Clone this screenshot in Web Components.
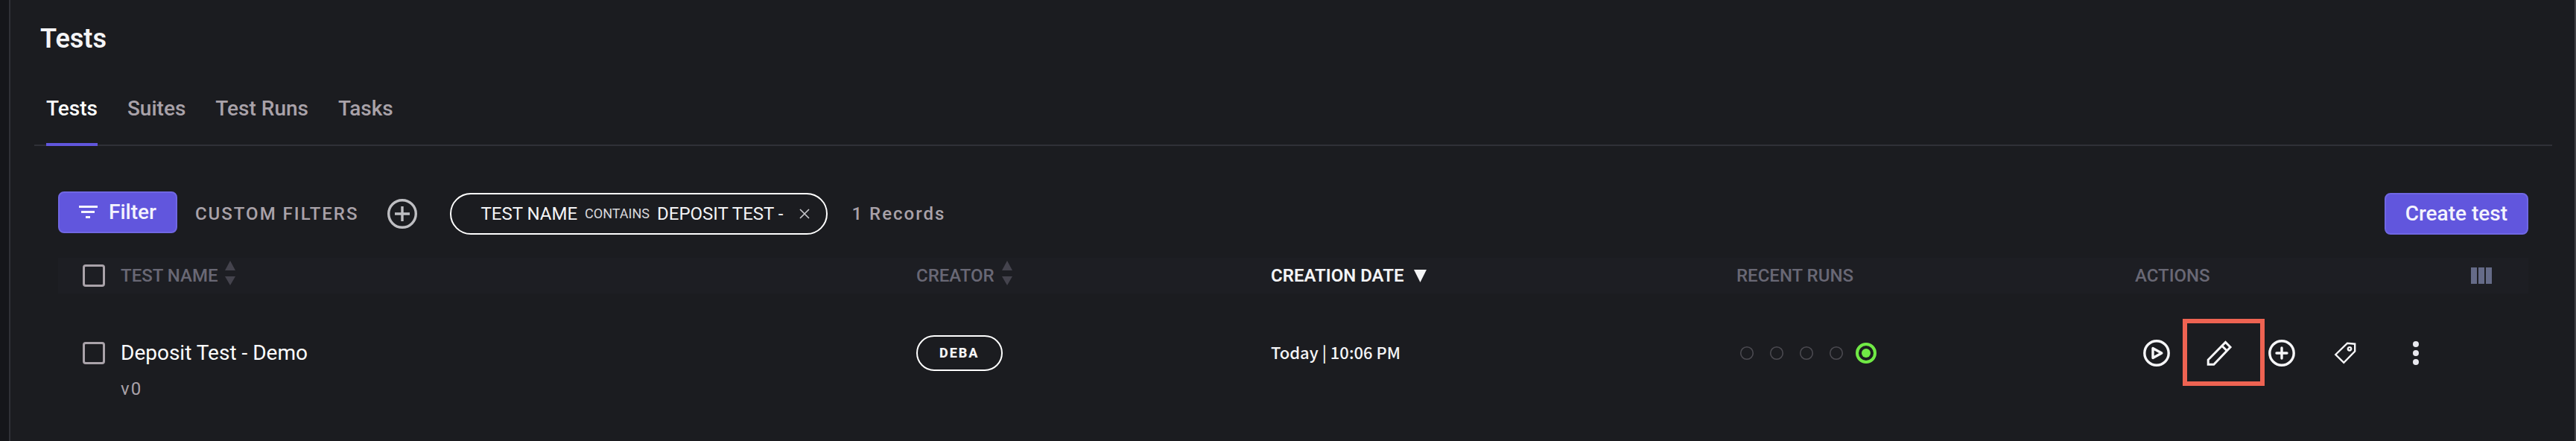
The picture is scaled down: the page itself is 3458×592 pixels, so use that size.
<!DOCTYPE html>
<html lang="en">
<head>
<meta charset="utf-8">
<title>Tests</title>
<style>
  body {
    margin: 0;
    background: #1b1c20;
    color: #f4f4f6;
    font: 400 24px/32px Roboto, "Open Sans", sans-serif;
    --muted: #a9a2a9;
    --dim: #696875;
    --accent: #6156dd;
    --accent-edge: #7067e3;
    --line: #303137;
  }
</style>
</head>
<body>
<app-shell>
  <page-title>Tests</page-title>
  <tab-bar>
    <tab-link active>Tests</tab-link>
    <tab-link>Suites</tab-link>
    <tab-link>Test Runs</tab-link>
    <tab-link>Tasks</tab-link>
  </tab-bar>
  <filter-toolbar>
    <accent-button slot="filter"><ui-icon slot="icon" name="filter"></ui-icon>Filter</accent-button>
    <filter-chip field="TEST NAME" operator="CONTAINS">DEPOSIT TEST -</filter-chip>
    <span slot="count">1 Records</span>
    <accent-button slot="create">Create test</accent-button>
  </filter-toolbar>
  <tests-table></tests-table>
</app-shell>

<script>
const define = (name, html, setup) => {
  const template = document.createElement('template');
  template.innerHTML = html;
  customElements.define(name, class extends HTMLElement {
    connectedCallback() {
      if (this.shadowRoot) return;
      const root = this.attachShadow({ mode: 'open' });
      root.append(template.content.cloneNode(true));
      if (setup) setup(this, root);
    }
  });
};

const ICONS = {
  filter: [26, 18, '<path fill="currentColor" d="M0 0h25v3H0zM3 7h18v3H3zM9 14h6v3H9z"/>'],
  add: [40, 40, '<g fill="none" stroke="currentColor" stroke-width="3.4"><circle cx="20" cy="20" r="18.3"/><path d="M20 10v20M10 20h20"/></g>'],
  close: [14, 14, '<path fill="none" stroke="currentColor" stroke-width="1.6" d="M1 1l12 12M13 1L1 13"/>'],
  sort: [14, 34, '<path fill="#44434d" d="M7 0l7 13H0zM0 21h14L7 33z"/>'],
  down: [22, 34, '<path fill="currentColor" d="M4 12h17L12.500 29z"/>'],
  columns: [30, 22, '<path fill="#656b88" d="M1 0h8v22H1zM11 0h8v22h-8zM21 0h8v22h-8z"/>'],
  play: [36, 36, '<g fill="none" stroke="currentColor" stroke-width="3.4" stroke-linejoin="round"><circle cx="18" cy="18" r="16.2"/><path d="M13 11.600V24.600L24.800 18.100z"/></g>'],
  edit: [36, 36, '<path fill="none" stroke="currentColor" stroke-width="3" d="M3.200 33.200V27L26.500 3.500 33 10 10.800 33.200zM21.700 8.200l6.600 6.600"/>'],
  plus: [36, 36, '<g fill="none" stroke="currentColor" stroke-width="3.400" stroke-linecap="round"><circle cx="18" cy="18" r="16.2"/><path d="M18 11v14M11 18h14"/></g>'],
  tag: [36, 36, '<g fill="none" stroke="currentColor" stroke-width="2.400"><path d="M6.300 20L22 4.700 32.200 5.700V15.500L17.300 30.800z"/><circle cx="25" cy="12.300" r="2.200"/></g>'],
  more: [36, 36, '<g fill="#e9e9ef"><circle cx="18" cy="6" r="4"/><circle cx="18" cy="18" r="4"/><circle cx="18" cy="30" r="4"/></g>'],
  idle: [28, 28, '<circle cx="14" cy="14" r="8.300" fill="none" stroke="#4b4a50" stroke-width="1.600"/>'],
  passed: [28, 28, '<circle cx="14" cy="14" r="12" fill="none" stroke="#70e945" stroke-width="4"/><circle cx="14" cy="14" r="6" fill="#70e945"/>']
};

define('ui-icon', `
  <style>:host { display: inline-flex; flex: none; } svg { display: block; }</style>`,
  (el, root) => {
    const [w, h, body] = ICONS[el.getAttribute('name')];
    root.innerHTML += `<svg width="${w}" height="${h}" viewBox="0 0 ${w} ${h}" aria-hidden="true">${body}</svg>`;
  });

define('app-shell', `
  <style>
    :host {
      display: block;
      box-sizing: border-box;
      min-height: 100vh;
      padding-top: 30px;
      background: #1b1c20;
      border-right: 2px solid #414145;
      box-shadow: inset 12px 0 #15161a, inset 14px 0 var(--line);
    }
  </style>
  <slot></slot>`);

define('page-title', `
  <style>
    :host { display: block; padding: 0 54px; }
    h1 { margin: 0; font-size: 36px; line-height: 44px; font-weight: 600; }
  </style>
  <h1><slot></slot></h1>`);

define('tab-bar', `
  <style>
    :host { display: block; margin: 54px 30px 0 46px; }
    nav { display: flex; gap: 40px; padding: 0 16px; box-shadow: inset 0 -2px var(--line); }
  </style>
  <nav><slot></slot></nav>`);

define('tab-link', `
  <style>
    :host { display: block; }
    a {
      display: block;
      padding-bottom: 28px;
      border-bottom: 4px solid transparent;
      color: var(--muted);
      font-size: 28px;
      line-height: 36px;
      font-weight: 500;
      text-decoration: none;
    }
    :host([active]) a { color: #fff; border-color: var(--accent); }
  </style>
  <a href="#"><slot></slot></a>`);

define('accent-button', `
  <style>
    :host { display: block; }
    button {
      display: flex;
      align-items: center;
      gap: 14px;
      height: 56px;
      padding: 0 26px;
      border: 2px solid var(--accent-edge);
      border-radius: 8px;
      background: var(--accent);
      color: #f4f3fd;
      font: inherit;
      font-size: 28px;
      font-weight: 500;
      white-space: nowrap;
    }
  </style>
  <button type="button"><slot name="icon"></slot><span><slot></slot></span></button>`);

define('filter-chip', `
  <style>
    :host {
      display: flex;
      align-items: center;
      gap: 10px;
      box-sizing: border-box;
      height: 56px;
      padding: 0 22px 0 40px;
      border: 2px solid #fff;
      border-radius: 28px;
      white-space: nowrap;
    }
    small { font-size: 18px; color: #d8d8dc; }
    button { display: flex; margin-left: 12px; padding: 0; border: 0; background: none; color: #c9c9cd; }
  </style>
  <span id="field"></span><small></small><span><slot></slot></span>
  <button type="button" aria-label="Remove filter"><ui-icon name="close"></ui-icon></button>`,
  (el, root) => {
    root.querySelector('#field').textContent = el.getAttribute('field');
    root.querySelector('small').textContent = el.getAttribute('operator');
  });

define('filter-toolbar', `
  <style>
    :host { display: flex; align-items: flex-end; min-height: 58px; margin: 61px 62px 0 78px; }
    .group { display: flex; align-items: center; height: 56px; flex: 1; }
    .label { color: var(--muted); font-weight: 500; letter-spacing: 2px; white-space: nowrap; }
    .add { display: flex; margin: 0 44px 0 38px; padding: 0; border: 0; background: none; color: #bebec2; }
    .first { align-self: flex-start; margin-right: 24px; }
    .count { margin-left: 32px; }
  </style>
  <div class="first"><slot name="filter"></slot></div>
  <div class="group">
    <span class="label">CUSTOM FILTERS</span>
    <button class="add" type="button" aria-label="Add custom filter"><ui-icon name="add"></ui-icon></button>
    <slot></slot>
    <span class="label count"><slot name="count"></slot></span>
  </div>
  <slot name="create"></slot>`);

define('recent-runs', `
  <style>:host { display: flex; gap: 12px; }</style>
  <ui-icon name="idle"></ui-icon><ui-icon name="idle"></ui-icon><ui-icon name="idle"></ui-icon><ui-icon name="idle"></ui-icon><ui-icon name="passed"></ui-icon>`);

define('row-actions', `
  <style>
    :host { display: flex; gap: 48px; padding-left: 11px; }
    button { position: relative; display: flex; padding: 0; border: 0; background: none; color: #f6f6f8; }
    .marked::after {
      content: "";
      position: absolute;
      inset: -28px -43px -26px -31px;
      border: 6px solid #ee6352;
    }
    .more { margin-left: 12px; }
  </style>
  <button type="button" aria-label="Run"><ui-icon name="play"></ui-icon></button>
  <button type="button" aria-label="Edit" class="marked"><ui-icon name="edit"></ui-icon></button>
  <button type="button" aria-label="Add"><ui-icon name="plus"></ui-icon></button>
  <button type="button" aria-label="Tag"><ui-icon name="tag"></ui-icon></button>
  <button type="button" aria-label="More" class="more"><ui-icon name="more"></ui-icon></button>`);

define('tests-table', `
  <style>
    :host { display: block; margin: 31px 62px 0 78px; }
    table { width: 100%; table-layout: fixed; border-collapse: collapse; }
    th, td { padding: 0; text-align: left; vertical-align: top; }
    thead { background: #1d1e23; }
    th { color: var(--dim); font-weight: 500; white-space: nowrap; }
    th > div { display: flex; align-items: center; gap: 10px; height: 48px; }
    th.sorted { color: #f4f4f6; font-weight: 600; }
    th ui-icon { margin-bottom: 6px; }
    td { padding-top: 62px; }
    .cell { display: flex; align-items: center; height: 36px; }
    .check { padding-left: 33px; }
    input {
      appearance: none;
      box-sizing: border-box;
      width: 30px;
      height: 30px;
      margin: 0;
      border: 3px solid var(--muted);
      border-radius: 4px;
    }
    .name { font-size: 28px; line-height: 36px; color: #fff; }
    .version { margin-top: 14px; color: var(--muted); letter-spacing: 2px; }
    .creator {
      box-sizing: border-box;
      height: 48px;
      padding: 0 29px;
      border: 2px solid #fff;
      border-radius: 24px;
      font-size: 18px;
      line-height: 44px;
      font-weight: 800;
      letter-spacing: 2px;
    }
    .date { align-items: flex-start; font: 500 22px/32px "Noto Sans CJK SC", Roboto, sans-serif; }
    .columns { display: flex; padding: 0; border: 0; background: none; }
    .columns ui-icon { margin: 0; }
    .w-check { width: 84px; } .w-creator { width: 476px; } .w-date { width: 625px; }
    .w-runs { width: 535px; } .w-actions { width: 450px; } .w-columns { width: 78px; }
  </style>
  <table>
    <colgroup>
      <col class="w-check"><col><col class="w-creator"><col class="w-date">
      <col class="w-runs"><col class="w-actions"><col class="w-columns">
    </colgroup>
    <thead>
      <tr>
        <th><div class="check"><input type="checkbox" aria-label="Select all tests"></div></th>
        <th><div>TEST NAME<ui-icon name="sort"></ui-icon></div></th>
        <th><div>CREATOR<ui-icon name="sort"></ui-icon></div></th>
        <th class="sorted" aria-sort="descending"><div>CREATION DATE<ui-icon name="down"></ui-icon></div></th>
        <th><div>RECENT RUNS</div></th>
        <th><div>ACTIONS</div></th>
        <th><div><button class="columns" type="button" aria-label="Choose columns"><ui-icon name="columns"></ui-icon></button></div></th>
      </tr>
    </thead>
    <tbody>
      <tr>
        <td><div class="cell check"><input type="checkbox" aria-label="Select Deposit Test - Demo"></div></td>
        <td><div class="name">Deposit Test - Demo</div><div class="version">v0</div></td>
        <td><div class="cell"><span class="creator">DEBA</span></div></td>
        <td><div class="cell date">Today | 10:06 PM</div></td>
        <td><div class="cell"><recent-runs></recent-runs></div></td>
        <td><div class="cell"><row-actions></row-actions></div></td>
        <td></td>
      </tr>
    </tbody>
  </table>`);
</script>
</body>
</html>
